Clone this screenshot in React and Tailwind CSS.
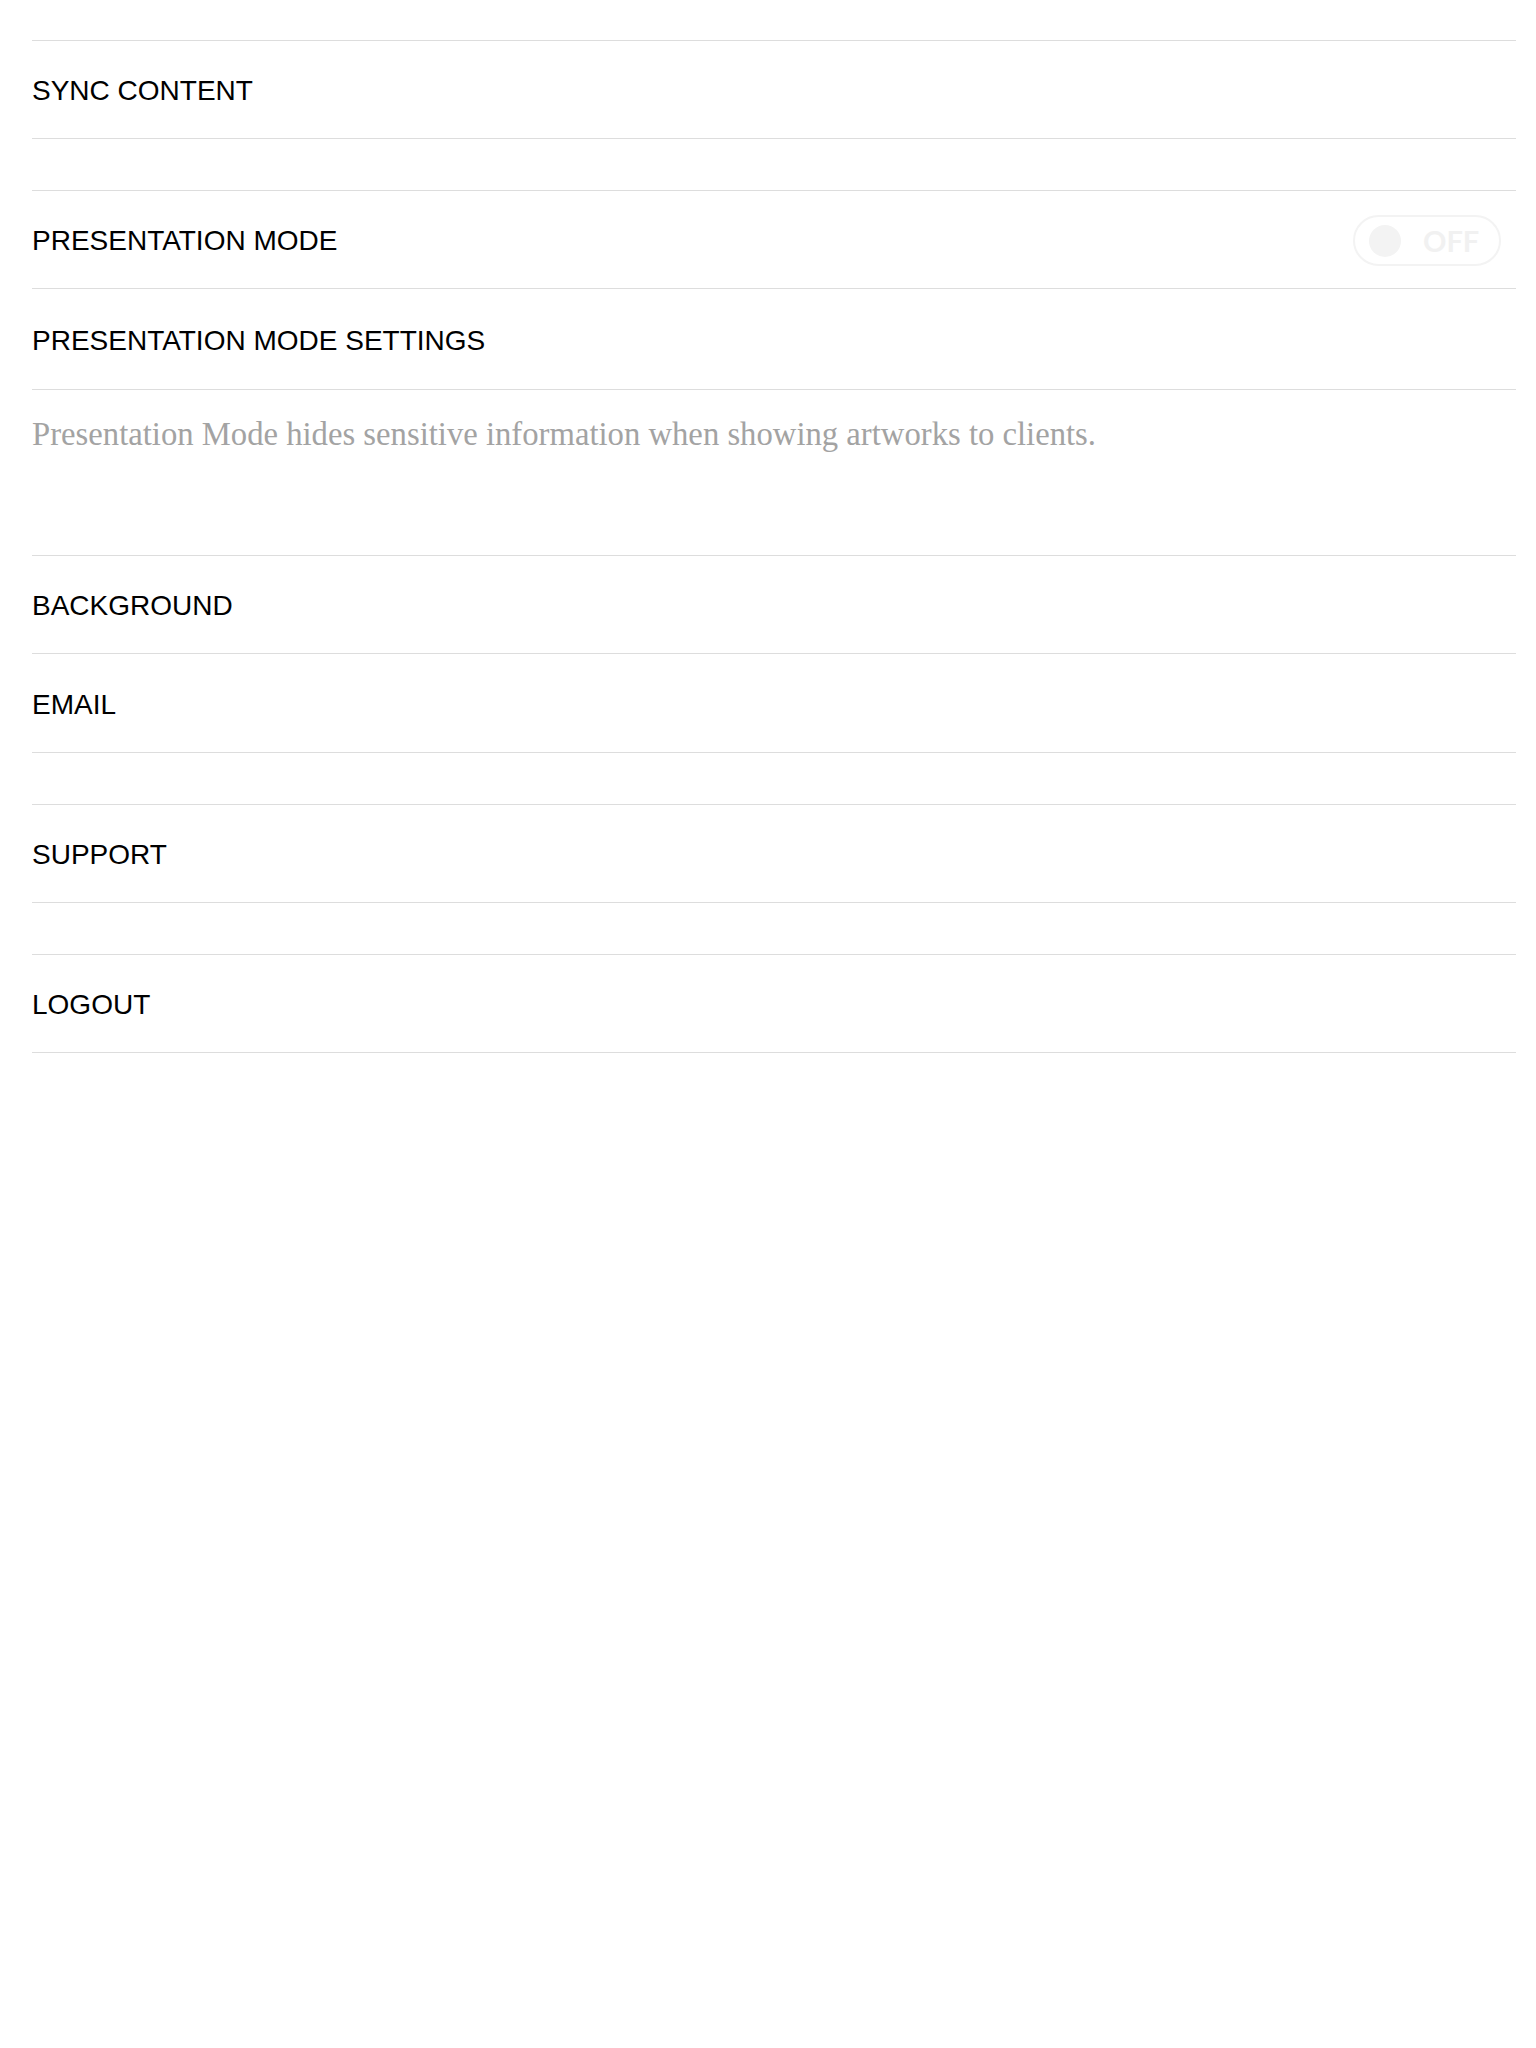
import React from "react";

const sans = { fontFamily: '"Liberation Sans", Arial, Helvetica, sans-serif' };

function Row({ label, h = "h-[98px]", children }) {
  return (
    <div className={`flex items-center justify-between ${h} border-b border-[#dddddd] pt-[2px] text-[28px] text-black`} style={sans}>
      <span>{label}</span>
      {children}
    </div>
  );
}

function Toggle() {
  return (
    <div className="mr-[15px] flex h-[51px] w-[148px] items-center rounded-full border-2 border-[#f3f3f3]">
      <div className="ml-[14px] h-[32px] w-[32px] rounded-full bg-[#f3f3f3]" />
      <span
        className="ml-[22px] text-[29px] font-bold leading-none text-[#f1f1f1]"
        style={{ fontFamily: 'Lato, "Open Sans", sans-serif' }}
      >
        OFF
      </span>
    </div>
  );
}

export default function App() {
  return (
    <div className="min-h-screen w-full bg-white pl-8 pr-5 pt-10">
      <div className="border-t border-[#dddddd]">
        <Row label="SYNC CONTENT" />
      </div>
      <div className="h-[51px]" />
      <div className="border-t border-[#dddddd]">
        <Row label="PRESENTATION MODE">
          <Toggle />
        </Row>
        <Row label="PRESENTATION MODE SETTINGS" h="h-[101px] pt-[4px]" />
        <div className="h-[165px] pt-[28px]">
          <p
            className="text-[32.7px] leading-[33px] text-[#a3a3a3]"
            style={{ fontFamily: '"Liberation Serif", "Times New Roman", serif' }}
          >
            Presentation Mode hides sensitive information when showing artworks to clients.
          </p>
        </div>
      </div>
      <div className="border-t border-[#dddddd]">
        <Row label="BACKGROUND" />
        <Row label="EMAIL" h="h-[99px] pt-[4px]" />
      </div>
      <div className="h-[51px]" />
      <div className="border-t border-[#dddddd]">
        <Row label="SUPPORT" />
      </div>
      <div className="h-[51px]" />
      <div className="border-t border-[#dddddd]">
        <Row label="LOGOUT" />
      </div>
    </div>
  );
}
